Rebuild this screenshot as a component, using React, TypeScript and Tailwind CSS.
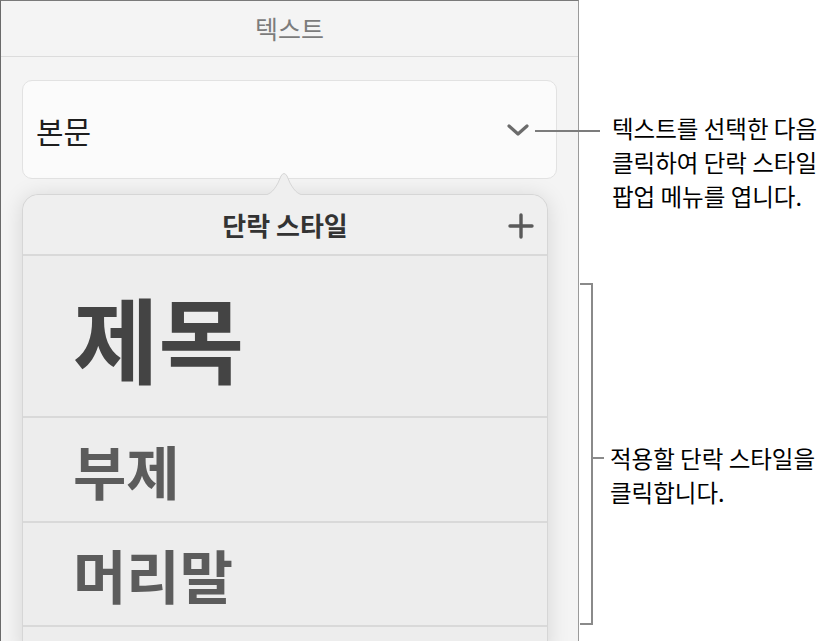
import React from 'react';

const font = { fontFamily: '"Noto Sans CJK KR", "Noto Sans", sans-serif' };

function Chevron() {
    return (
        <svg width="24" height="14" viewBox="0 0 24 14" className="shrink-0">
            <polyline points="3,3 12,11 21,3" fill="none" stroke="#6b6b6b" strokeWidth="3.2" strokeLinecap="round" strokeLinejoin="round" />
        </svg>
    );
}

function Plus() {
    return (
        <svg width="26" height="26" viewBox="0 0 26 26">
            <line x1="13" y1="2" x2="13" y2="24" stroke="#5a5a5a" strokeWidth="3.4" strokeLinecap="round" />
            <line x1="2" y1="13" x2="24" y2="13" stroke="#5a5a5a" strokeWidth="3.4" strokeLinecap="round" />
        </svg>
    );
}

const styles = [
    { name: '제목', cls: 'h-[162px] text-[93px] text-[#444444]' },
    { name: '부제', cls: 'h-[105px] text-[58px] text-[#5c5c5c]' },
    { name: '머리말', cls: 'h-[104px] text-[58px] text-[#5c5c5c]' },
];

export default function App() {
    return (
        <div className="flex h-[641px] w-[836px] overflow-hidden bg-white" style={font}>
            {/* inspector panel */}
            <div className="h-[641px] w-[579px] shrink-0 overflow-hidden border-t border-l border-r border-t-[#7a7a7a] border-l-[#6a6a6a] border-r-[#9a9a9a] bg-[#f4f4f4]">
                <div className="flex h-[56px] items-center justify-center border-b border-[#dcdcdc] text-[25px] text-[#7c7c7c]">
                    텍스트
                </div>
                <div className="mx-[21px] mt-[23px] flex h-[99px] items-center justify-between rounded-[10px] border border-[#e2e2e2] bg-[#fbfbfb] pr-[26px] pl-[13px]">
                    <span className="text-[30px] leading-none text-[#1e1e1e]">본문</span>
                    <Chevron />
                </div>

                {/* popover */}
                <div className="relative mt-[15px] mr-[30px] ml-[21px] h-[460px] rounded-t-[16px] border border-[#d6d6d6] bg-[#ededed] shadow-[0_2px_22px_rgba(0,0,0,0.13)]">
                    <svg width="52" height="27" viewBox="0 0 52 27" className="absolute top-[-25px] left-[235px]">
                        <path
                            d="M0 26 C11 26 15 22 20 13 L23 6 Q26 1 29 6 L32 13 C37 22 41 26 52 26"
                            fill="#efefef"
                            stroke="#d6d6d6"
                            strokeWidth="1"
                        />
                        <rect x="0" y="26" width="52" height="2" fill="#efefef" />
                    </svg>
                    <div className="relative flex h-[61px] items-center justify-center rounded-t-[16px] border-b-2 border-[#d9d9d9] bg-[#efefef]">
                        <span className="text-[26px] font-bold text-[#333333]">단락 스타일</span>
                        <span className="absolute top-[18px] right-[13px]">
                            <Plus />
                        </span>
                    </div>
                    {styles.map((s) => (
                        <div key={s.name} className={`flex items-center border-b-2 border-[#d9d9d9] pl-[50px] font-bold leading-none ${s.cls}`}>
                            {s.name}
                        </div>
                    ))}
                </div>
            </div>

            {/* callouts */}
            <div className="relative flex flex-col pt-[111px] text-[23.5px] leading-[34px] text-black">
                <div className="absolute top-[130px] left-[-44px] h-[2px] w-[65px] bg-[#7c7c7c]" />
                <div className="ml-[33px]">
                    <div>텍스트를 선택한 다음</div>
                    <div>클릭하여 단락 스타일</div>
                    <div>팝업 메뉴를 엽니다.</div>
                </div>
                <div className="mt-[70px] ml-[1px] flex">
                    <div className="h-[342px] w-[13px] border-y-2 border-r-2 border-[#8a8a8a]" />
                    <div className="pt-[158px]">
                        <div className="flex items-center">
                            <div className="h-[2px] w-[11px] bg-[#8a8a8a]" />
                            <span className="ml-[6px]">적용할 단락 스타일을</span>
                        </div>
                        <div className="ml-[17px]">클릭합니다.</div>
                    </div>
                </div>
            </div>
        </div>
    );
}
